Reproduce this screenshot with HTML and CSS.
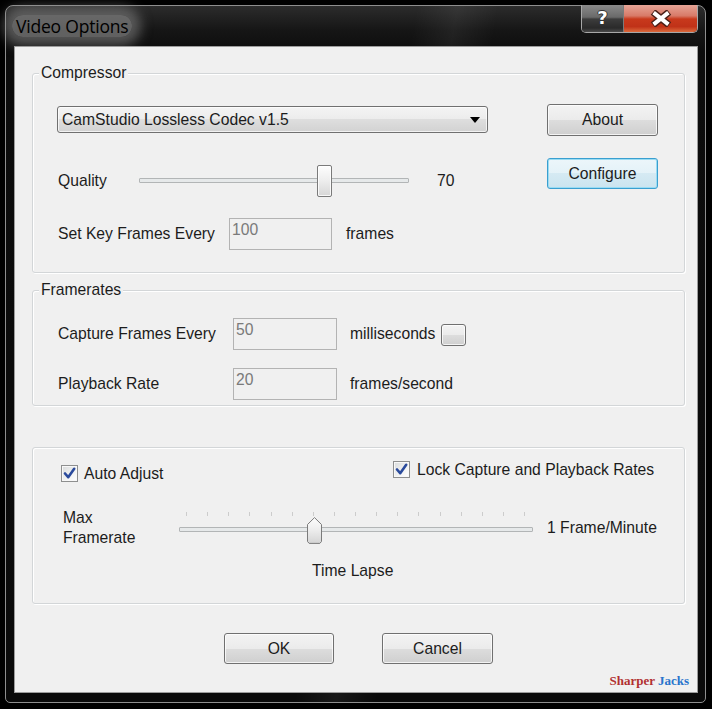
FILE: index.html
```html
<!DOCTYPE html>
<html>
<head>
<meta charset="utf-8">
<title>Video Options</title>
<link rel="stylesheet" href="styles.css">
</head>
<body>
<div class="window">
  <div class="titlebar">
    <span class="title">Video Options</span>
    <div class="caption-btns">
      <div class="cbtn help"><span class="help-glyph">?</span></div>
      <div class="cbtn close">
        <svg width="24" height="17" viewBox="0 0 24 17">
          <path d="M4 2 L20 15 M20 2 L4 15" stroke="#4a2018" stroke-width="7" fill="none"/>
          <path d="M4.6 2.6 L19.4 14.4 M19.4 2.6 L4.6 14.4" stroke="#ffffff" stroke-width="4" fill="none"/>
        </svg>
      </div>
    </div>
  </div>
  <div class="client">
    <div class="group g1">
      <div class="legend">Compressor</div>
      <div class="g1-body">
        <div class="g1-left">
          <div class="select">
            <span>CamStudio Lossless Codec v1.5</span>
            <span class="arrow"></span>
          </div>
          <div class="row quality">
            <span class="lbl-quality">Quality</span>
            <div class="slider-h">
              <div class="track"></div>
              <div class="thumb-rect"></div>
            </div>
            <span class="value">70</span>
          </div>
          <div class="row keyframes">
            <span class="lbl-key">Set Key Frames Every</span>
            <div class="input w103">100</div>
            <span class="unit">frames</span>
          </div>
        </div>
        <div class="g1-right">
          <div class="btn about">About</div>
          <div class="btn default configure">Configure</div>
        </div>
      </div>
    </div>

    <div class="group g2">
      <div class="legend">Framerates</div>
      <div class="g2-body">
        <span class="lbl">Capture Frames Every</span>
        <div class="input w104">50</div>
        <div class="unit2"><span>milliseconds</span><div class="btn mini"></div></div>
        <span class="lbl">Playback Rate</span>
        <div class="input w104">20</div>
        <div class="unit2"><span>frames/second</span></div>
      </div>
    </div>

    <div class="group g3">
      <div class="checks">
        <label class="check auto">
          <span class="box"><svg width="15" height="15" viewBox="0 0 15 15"><path d="M3 7.5 L6.2 11.2 L12.2 2.8" stroke="#2a4a9c" stroke-width="2.6" fill="none" stroke-linejoin="round" stroke-linecap="round"/></svg></span>
          <span>Auto Adjust</span>
        </label>
        <label class="check lock">
          <span class="box"><svg width="15" height="15" viewBox="0 0 15 15"><path d="M3 7.5 L6.2 11.2 L12.2 2.8" stroke="#2a4a9c" stroke-width="2.6" fill="none" stroke-linejoin="round" stroke-linecap="round"/></svg></span>
          <span>Lock Capture and Playback Rates</span>
        </label>
      </div>
      <div class="rate-row">
        <div class="lbl-max">Max<br>Framerate</div>
        <div class="slider-t">
          <div class="ticks">
            <i></i><i></i><i></i><i></i><i></i><i></i><i></i><i></i><i></i><i></i><i></i><i></i><i></i><i></i><i></i><i></i><i></i>
          </div>
          <div class="track2"></div>
          <svg class="thumb-pt" width="15" height="27" viewBox="0 0 15 27">
            <defs>
              <linearGradient id="tg" x1="0" y1="0" x2="0" y2="1">
                <stop offset="0" stop-color="#fdfdfd"/>
                <stop offset="0.5" stop-color="#ececec"/>
                <stop offset="1" stop-color="#d4d4d4"/>
              </linearGradient>
            </defs>
            <polygon points="0.5,7.5 7.5,0.6 14.5,7.5 14.5,24.5 12.8,26.4 2.2,26.4 0.5,24.5" fill="url(#tg)" stroke="#7b7b7b" stroke-width="1"/>
          </svg>
        </div>
        <span class="rate-val">1 Frame/Minute</span>
      </div>
      <div class="timelapse">Time Lapse</div>
    </div>

    <div class="actions">
      <div class="btn ok">OK</div>
      <div class="btn cancel">Cancel</div>
    </div>
    <div class="watermark"><span class="wm-red">Sharper</span> <span class="wm-blue">Jacks</span></div>
  </div>
</div>
</body>
</html>
```

FILE: styles.css
```css
* { box-sizing: border-box; }
html, body { margin: 0; padding: 0; background: #000; }
body {
  width: 712px;
  height: 709px;
  overflow: hidden;
  font-family: "Liberation Sans", Arial, sans-serif;
  font-size: 15.7px;
  color: #1c1c1c;
}

.window {
  margin: 5px 0 0 5px;
  width: 701px;
  height: 698px;
  border: 1px solid #8e8e8e;
  border-radius: 8px 8px 5px 5px;
  background:
    linear-gradient(100deg, rgba(255,255,255,0) 50%, rgba(255,255,255,0.06) 55%, rgba(255,255,255,0) 60%),
    linear-gradient(to bottom, #2c2c2c 0px, #161616 24px, #0c0c0c 46px, #0a0a0a 100%);
  padding: 0 7px 9px 8px;
  display: flex;
  flex-direction: column;
}

.titlebar {
  height: 40px;
  flex: none;
  display: flex;
  justify-content: space-between;
  align-items: flex-start;
}
.title {
  margin: 9px 0 0 -2px;
  padding: 0 4px;
  font-family: "Open Sans", "Noto Sans", sans-serif;
  font-size: 17.5px;
  line-height: 22px;
  color: #000;
  background: rgba(160,160,160,0.55);
  border-radius: 12px;
  box-shadow: 0 0 12px 9px rgba(150,150,150,0.5);
  letter-spacing: -0.2px;
}

.caption-btns {
  display: flex;
  border: 1px solid #a8a8a8;
  border-top: none;
  border-radius: 0 0 5px 5px;
  overflow: hidden;
  height: 28px;
  margin-top: -1px;
}
.cbtn {
  height: 100%;
  display: flex;
  align-items: center;
  justify-content: center;
}
.help {
  width: 42px;
  border-right: 1px solid #7a7a7a;
  background: linear-gradient(to bottom, #8a8a8a 0%, #6a6a6a 45%, #3c3c3c 52%, #2a2a2a 85%, #4a4a4a 100%);
}
.help-glyph {
  font-family: "DejaVu Sans", sans-serif;
  font-weight: bold;
  font-size: 18px;
  line-height: 18px;
  color: #fff;
  text-shadow: 1px 0 0 #333, -1px 0 0 #333, 0 1px 0 #333, 0 -1px 0 #333;
  margin-top: -1px;
}
.close {
  width: 73px;
  background: linear-gradient(to bottom, #e6a496 0%, #d87a68 40%, #c8391c 52%, #c03218 80%, #dc6a3c 100%);
}
.close svg { margin-top: -1px; }

.client {
  flex: 1;
  border: 1px solid #9c9c9c;
  background: #f0f0f0;
  padding: 0 12px 0 17px;
  display: flex;
  flex-direction: column;
}

.group {
  border: 1px solid #d3d6d8;
  border-radius: 3px;
  box-shadow: inset 1px 1px 0 #ffffff, 1px 1px 0 #ffffff;
  flex: none;
}
.legend {
  display: table;
  margin: -9px 0 0 6px;
  padding: 0 2px;
  line-height: 16px;
  background: #f0f0f0;
}

/* Group 1 */
.g1 { margin-top: 26px; height: 200px; }
.g1-body { display: flex; padding-left: 24px; }
.g1-left { width: 431px; }
.select {
  margin-top: 25px;
  height: 27px;
  border: 1px solid #707070;
  border-radius: 3px;
  background: linear-gradient(to bottom, #f4f4f4 0%, #ececec 50%, #dedede 50%, #d2d2d2 100%);
  box-shadow: inset 0 0 0 1px rgba(255,255,255,0.7);
  display: flex;
  align-items: center;
  justify-content: space-between;
  padding: 0 7px 0 4px;
  line-height: 18px;
}
.arrow {
  width: 0; height: 0;
  border-left: 5px solid transparent;
  border-right: 5px solid transparent;
  border-top: 6px solid #000;
}
.row { display: flex; align-items: center; }
.quality { margin-top: 32px; height: 32px; }
.lbl-quality { width: 82px; padding-left: 1px; }
.slider-h { position: relative; width: 270px; height: 32px; }
.track {
  position: absolute;
  left: 0; right: 0; top: 13px;
  height: 5px;
  border: 1px solid #b2b5b6;
  border-radius: 1px;
  background: #e6e9ea;
}
.thumb-rect {
  position: absolute;
  left: 178px; top: 0;
  width: 15px; height: 32px;
  border: 1px solid #7a7a7a;
  border-radius: 2px;
  background: linear-gradient(to bottom, #fdfdfd 0%, #ededed 50%, #d6d6d6 100%);
  box-shadow: inset 0 0 0 1px rgba(255,255,255,0.8);
}
.value { margin-left: 28px; }
.keyframes { margin-top: 21px; height: 32px; }
.lbl-key { width: 172px; padding-left: 1px; }
.input {
  height: 32px;
  border: 1px solid #b3b3b3;
  background: #f0f0f0;
  color: #7a7a7a;
  padding: 3px 2px;
  line-height: 16px;
}
.w103 { width: 103px; }
.w104 { width: 104px; }
.unit { margin-left: 14px; }
.g1-right { margin-left: 59px; width: 111px; display: flex; flex-direction: column; }

.btn {
  border: 1px solid #707070;
  border-radius: 3px;
  background: linear-gradient(to bottom, #f3f3f3 0%, #ebebeb 50%, #dddddd 50%, #cfcfcf 100%);
  box-shadow: inset 0 0 0 1px rgba(255,255,255,0.75);
  display: flex;
  align-items: center;
  justify-content: center;
  line-height: 18px;
}
.about { margin-top: 23px; height: 32px; }
.configure { margin-top: 22px; height: 31px; }
.btn.default {
  border-color: #3a9fd0;
  background: linear-gradient(to bottom, #ecf6fa 0%, #e4f2f8 50%, #d5eaf3 50%, #cbe4ef 100%);
  box-shadow: inset 0 0 0 1px #9adcf3;
}

/* Group 2 */
.g2 { margin-top: 17px; height: 116px; }
.g2-body {
  margin-top: 20px;
  padding-left: 24px;
  display: grid;
  grid-template-columns: 176px 104px auto;
  grid-auto-rows: 32px;
  row-gap: 18px;
  align-items: center;
}
.lbl { padding-left: 1px; }
.unit2 { margin-left: 13px; display: flex; align-items: center; }
.mini { width: 25px; height: 22px; margin-left: 6px; margin-top: 2px; }

/* Group 3 */
.g3 { margin-top: 41px; height: 157px; }
.checks {
  display: grid;
  grid-template-columns: 332px auto;
  align-items: start;
  padding-left: 28px;
}
.check { display: flex; align-items: center; line-height: 17px; }
.check.auto { margin-top: 17px; }
.check.lock { margin-top: 13px; }
.box {
  width: 17px; height: 17px;
  border: 1px solid #8e8f8f;
  background: linear-gradient(135deg, #d9dbdc 0%, #f2f3f3 60%, #ffffff 100%);
  box-shadow: inset 0 0 0 1px #f8f8f8;
  display: flex;
  align-items: center;
  justify-content: center;
  margin-right: 6px;
}
.check.lock .box { margin-right: 7px; }
.rate-row {
  margin-top: 26px;
  padding-left: 30px;
  display: flex;
  align-items: center;
  height: 40px;
}
.lbl-max { width: 116px; line-height: 20px; }
.slider-t { position: relative; width: 354px; height: 40px; }
.ticks {
  position: absolute;
  left: 7px; right: 8px; top: 4px;
  height: 4px;
  display: flex;
  justify-content: space-between;
}
.ticks i { display: block; width: 1px; height: 4px; background: #cccccc; }
.track2 {
  position: absolute;
  left: 0; right: 0; top: 19px;
  height: 5px;
  border: 1px solid #b2b5b6;
  border-radius: 1px;
  background: #e6e9ea;
}
.thumb-pt { position: absolute; left: 128px; top: 9px; display: block; }
.rate-val { margin-left: 14px; }
.timelapse { margin: 14px 0 0 279px; line-height: 18px; }

/* Actions */
.actions {
  margin-top: 29px;
  display: flex;
  justify-content: center;
  gap: 48px;
}
.ok { width: 110px; height: 31px; }
.cancel { width: 111px; height: 31px; }
.watermark {
  margin: 9px -4px 0 0;
  text-align: right;
  font-family: "Liberation Serif", "Times New Roman", serif;
  font-weight: bold;
  font-size: 13px;
  line-height: 16px;
}
.wm-red { color: #b23030; }
.wm-blue { color: #2874cc; }
```
